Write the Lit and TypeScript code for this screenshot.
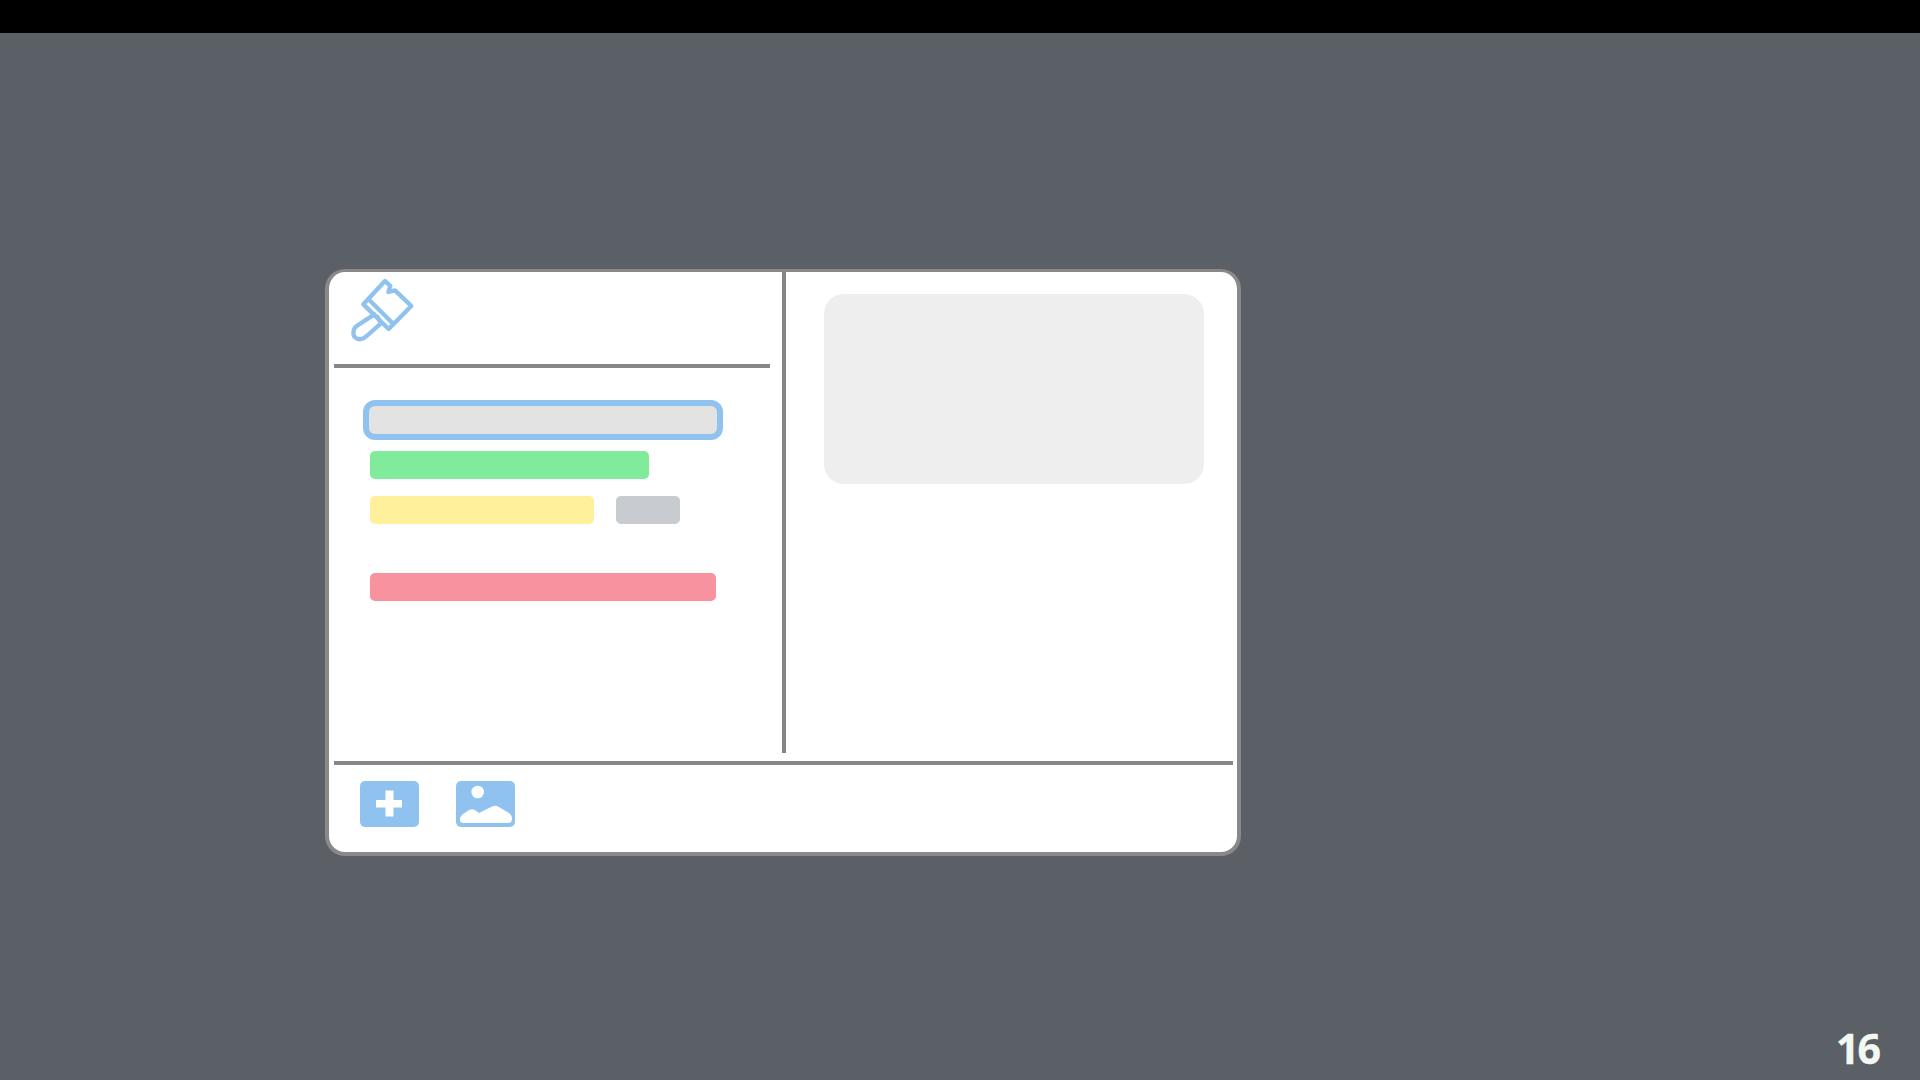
import { LitElement, html, css } from "lit";
import { customElement } from "lit/decorators.js";

@customElement("app-root")
export class AppRoot extends LitElement {
  static styles = css`
    :host { display: flex; flex-direction: column; width: 1920px; height: 1080px; background: #5b5f66; font-family: "Open Sans", sans-serif; overflow: hidden; }
    .topbar { height: 33px; background: #000; flex: none; }
    .stage { flex: 1; display: flex; flex-direction: column; padding: 236px 41px 6px 325px; min-height: 0; }
    .card { box-sizing: border-box; width: 916px; height: 587px; background: #fff; border: 4px solid #8b8889; border-top-width: 3px; border-radius: 20px; display: flex; flex-direction: column; flex: none; }
    .main { display: flex; height: 481px; flex: none; }
    .left { width: 453px; flex: none; padding-left: 5px; box-sizing: border-box; }
    .divider { width: 4px; background: #868686; flex: none; }
    .right { flex: 1; padding: 22px 0 0 38px; }
    .panel { width: 380px; height: 190px; background: #eeeeee; border-radius: 20px; }
    .head { height: 92px; padding-left: 11px; }
    .brush { display: block; width: 75px; height: 75px; }
    .rule { height: 4px; background: #868686; }
    .head-rule { width: 436px; }
    .form { padding: 32px 0 0 29px; display: flex; flex-direction: column; align-items: flex-start; }
    .field { box-sizing: border-box; width: 360px; height: 40px; border: 6px solid #90c2f0; border-radius: 12px; background: #e3e3e3; }
    .bar { height: 28px; border-radius: 5px; margin-left: 7px; }
    .green { width: 279px; background: #80eb9b; margin-top: 11px; }
    .row { display: flex; gap: 22px; margin-top: 17px; margin-left: 7px; }
    .row .bar { margin-left: 0; }
    .yellow { width: 224px; background: #fff09c; }
    .grey { width: 64px; background: #c8cbcf; }
    .red { width: 346px; background: #f8929f; margin-top: 49px; }
    .bottom-rule { margin: 8px 4px 0 5px; flex: none; }
    .tools { display: flex; gap: 37px; padding: 16px 0 0 31px; }
    .tool { display: block; width: 59px; height: 46px; }
    .page { margin-top: auto; align-self: flex-end; color: #f2f8f2; font-size: 41px; font-weight: 700; line-height: 52px; letter-spacing: -2px; -webkit-text-stroke: 0.4px #f2f8f2; }
  `;

  render() {
    return html`
      <div class="topbar"></div>
      <div class="stage">
        <div class="card">
          <div class="main">
            <div class="left">
              <div class="head">
                <svg class="brush" viewBox="75 36 225 225" fill="none" stroke="#90c2f0" stroke-width="13" stroke-linejoin="round" stroke-linecap="round">
                  <path d="M195 63 L211 78 L205 96 L225 91 L274 138 L206 207 L130 133 Z" />
                  <path d="M147 119 L218 190" />
                  <path d="M163 163 L110 198 C98 206 98 226 105 232 C115 242 130 238 140 228 L183 190 L172 170" />
                </svg>
              </div>
              <div class="rule head-rule"></div>
              <div class="form">
                <div class="field"></div>
                <div class="bar green"></div>
                <div class="row">
                  <div class="bar yellow"></div>
                  <div class="bar grey"></div>
                </div>
                <div class="bar red"></div>
              </div>
            </div>
            <div class="divider"></div>
            <div class="right"><div class="panel"></div></div>
          </div>
          <div class="rule bottom-rule"></div>
          <div class="tools">
            <svg class="tool" viewBox="0 0 59 46">
              <rect width="59" height="46" rx="5" fill="#90c2f0" />
              <path d="M25.5 9.5 H33.5 V19 H42 V26.5 H33.5 V35.5 H25.5 V26.5 H16 V19 H25.5 Z" fill="#fff" />
            </svg>
            <svg class="tool" viewBox="0 0 59 46">
              <rect width="59" height="46" rx="5" fill="#90c2f0" />
              <circle cx="21.7" cy="11" r="6.3" fill="#fff" />
              <path d="M4 38 C4 36 5 35 7 33 L13 29 C15 28 17 28 19 29 L23 32 L36 25.5 C38 24.5 40 24.5 42 25.5 L53 32 C55 33.5 56 35 56 38 C56 41 54 42 52 42 H8 C5 42 4 41 4 38 Z" fill="#fff" />
            </svg>
          </div>
        </div>
        <div class="page">16</div>
      </div>
    `;
  }
}
